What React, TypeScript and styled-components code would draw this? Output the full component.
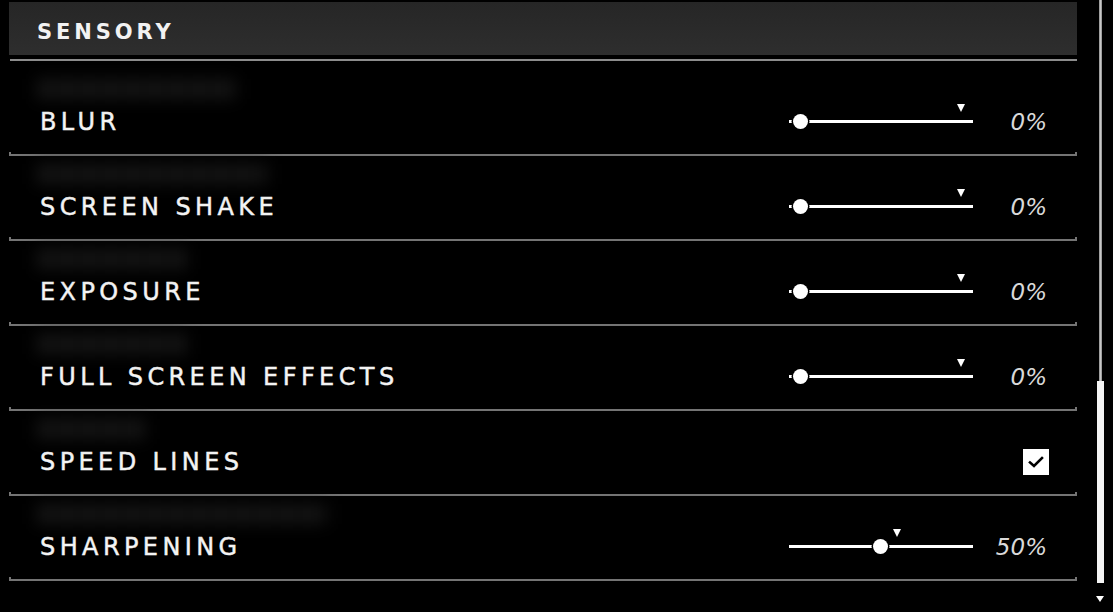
import React from "react";
import styled, { createGlobalStyle } from "styled-components";

const Global = createGlobalStyle`
  html, body { margin: 0; padding: 0; background: #000; }
  body { font-family: "DejaVu Sans", "Liberation Sans", sans-serif; }
  * { box-sizing: border-box; }
`;

const Screen = styled.div`
  width: 1113px;
  height: 612px;
  overflow: hidden;
  background: #000;
  display: flex;
  padding-left: 9px;
`;

const Content = styled.div`
  width: 1068px;
  display: flex;
  flex-direction: column;
  padding-top: 2px;
`;

const Header = styled.div`
  height: 53px;
  background: linear-gradient(180deg, #262626 0%, #2e2e2e 100%);
  display: flex;
  align-items: center;
  padding-left: 28px;
  padding-top: 7px;
`;

const HeaderTitle = styled.h2`
  margin: 0;
  color: #f2f2f2;
  font-family: "DejaVu Sans", sans-serif;
  font-weight: 700;
  font-size: 21px;
  letter-spacing: 3.9px;
`;

const HeaderLine = styled.div`
  margin-top: 4px;
  height: 2px;
  background: #8c8c8c;
  margin-left: 1px;
`;

const Spacer = styled.div`
  height: 12px;
`;

const Row = styled.div`
  height: 85px;
  display: flex;
  flex-direction: column;
`;

const GhostArea = styled.div`
  height: 33px;
  padding: 6px 0 0 28px;
`;

const Ghost = styled.div<{ $w: number }>`
  height: 20px;
  width: ${(p) => p.$w}px;
  background: repeating-linear-gradient(90deg, #161616 0 16px, #0d0d0d 16px 22px);
  filter: blur(8px);
`;

const Main = styled.div`
  height: 32px;
  display: flex;
  align-items: center;
  padding-left: 31px;
  padding-right: 28px;
`;

const Label = styled.div`
  flex: 1;
  color: #f4f4f4;
  font-family: "DejaVu Sans", sans-serif;
  font-size: 24px;
  letter-spacing: 4.4px;
  -webkit-text-stroke: 0.45px #f4f4f4;
  white-space: nowrap;
`;

const Fill = styled.div`
  flex: 1;
`;

const Divider = styled.div`
  height: 4px;
  border: 2px solid #747474;
  border-top: none;
  margin-top: auto;
  margin-bottom: 2px;
`;

const SliderBox = styled.div`
  position: relative;
  width: 184px;
  height: 32px;
`;

const Track = styled.div`
  position: absolute;
  left: 0;
  right: 0;
  top: 14px;
  height: 3px;
  background: #fff;
`;

const Thumb = styled.div`
  position: absolute;
  top: 8px;
  width: 15px;
  height: 15px;
  margin-left: -7.5px;
  border-radius: 50%;
  background: #fff;
  box-shadow: 0 0 0 1.5px #000;
`;

const Marker = styled.div`
  position: absolute;
  top: -2px;
  margin-left: -4.5px;
  width: 0;
  height: 0;
  border-left: 4.5px solid transparent;
  border-right: 4.5px solid transparent;
  border-top: 8px solid #fff;
`;

const Value = styled.div`
  width: 76px;
  text-align: right;
  color: #d9d9d9;
  font-family: "DejaVu Sans", sans-serif;
  font-style: italic;
  font-weight: 300;
  font-size: 23px;
  padding-right: 2px;
`;

const CheckBox = styled.div`
  width: 26px;
  height: 26px;
  background: #fff;
  display: flex;
  align-items: center;
  justify-content: center;
`;

const ScrollBar = styled.div`
  margin-left: 19px;
  width: 8px;
  display: flex;
  flex-direction: column;
  align-items: center;
`;

const ScrollLine = styled.div`
  width: 3px;
  height: 381px;
  background: linear-gradient(90deg, #8a8a8a, #c8c8c8, #8a8a8a);
`;

const ScrollThumb = styled.div`
  width: 7px;
  height: 202px;
  background: #f4f4f4;
`;

const ScrollArrow = styled.div`
  margin-top: 13px;
  width: 0;
  height: 0;
  border-left: 4px solid transparent;
  border-right: 4px solid transparent;
  border-top: 6px solid #fff;
`;

type Item =
  | { label: string; ghost: number; kind: "slider"; value: number; thumb: number; marker: number }
  | { label: string; ghost: number; kind: "check" };

const items: Item[] = [
  { label: "BLUR", ghost: 200, kind: "slider", value: 0, thumb: 11, marker: 172 },
  { label: "SCREEN SHAKE", ghost: 230, kind: "slider", value: 0, thumb: 11, marker: 172 },
  { label: "EXPOSURE", ghost: 150, kind: "slider", value: 0, thumb: 11, marker: 172 },
  { label: "FULL SCREEN EFFECTS", ghost: 150, kind: "slider", value: 0, thumb: 11, marker: 172 },
  { label: "SPEED LINES", ghost: 110, kind: "check" },
  { label: "SHARPENING", ghost: 290, kind: "slider", value: 50, thumb: 91.5, marker: 108 },
];

const Slider: React.FC<{ thumb: number; marker: number }> = ({ thumb, marker }) => (
  <SliderBox>
    <Track />
    <Marker style={{ left: marker }} />
    <Thumb style={{ left: thumb }} />
  </SliderBox>
);

export default function App() {
  return (
    <>
      <Global />
      <Screen>
        <Content>
          <Header>
            <HeaderTitle>SENSORY</HeaderTitle>
          </Header>
          <HeaderLine />
          <Spacer />
          {items.map((it, i) => (
            <Row key={i}>
              <GhostArea>
                <Ghost $w={it.ghost} />
              </GhostArea>
              <Main>
                <Label>{it.label}</Label>
                {it.kind === "slider" ? (
                  <>
                    <Slider thumb={it.thumb} marker={it.marker} />
                    <Value>{it.value}%</Value>
                  </>
                ) : (
                  <>
                    <Fill />
                    <CheckBox>
                      <svg width="16" height="12" viewBox="0 0 16 12">
                        <path d="M2 6.5 L6 10 L14 2" fill="none" stroke="#000" strokeWidth="2.6" strokeLinecap="square" />
                      </svg>
                    </CheckBox>
                  </>
                )}
              </Main>
              <Divider />
            </Row>
          ))}
        </Content>
        <ScrollBar>
          <ScrollLine />
          <ScrollThumb />
          <ScrollArrow />
        </ScrollBar>
      </Screen>
    </>
  );
}
